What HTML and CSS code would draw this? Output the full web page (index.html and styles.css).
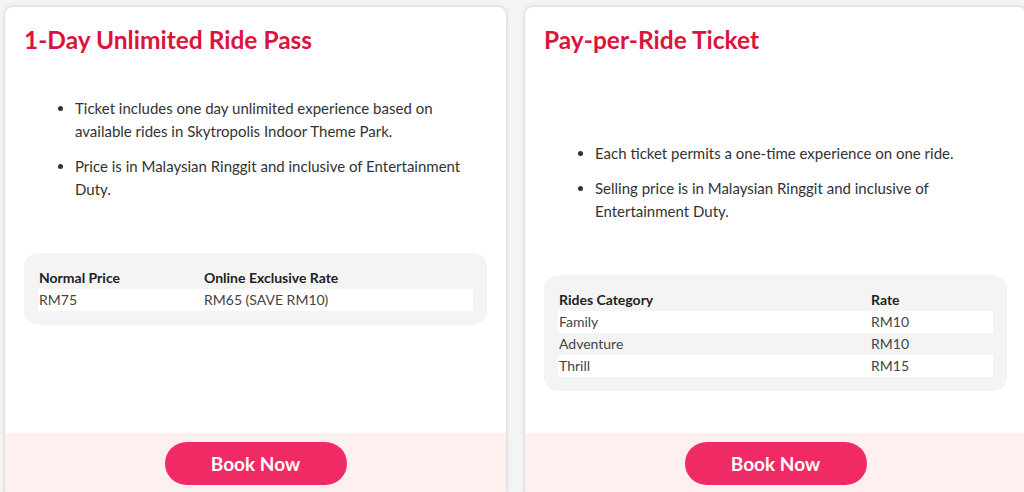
FILE: index.html
```html
<!DOCTYPE html>
<html>
<head>
<meta charset="utf-8">
<link rel="stylesheet" href="styles.css">
</head>
<body>
<div class="cards">
  <div class="card">
    <div class="card-body">
      <h2 class="title">1-Day Unlimited Ride Pass</h2>
      <ul class="list list-first">
        <li>Ticket includes one day unlimited experience based on available rides in Skytropolis Indoor Theme Park.</li>
        <li>Price is in Malaysian Ringgit and inclusive of Entertainment Duty.</li>
      </ul>
      <div class="table-box">
        <table class="rates">
          <tr><th class="col-a">Normal Price</th><th>Online Exclusive Rate</th></tr>
          <tr><td>RM75</td><td>RM65 (SAVE RM10)</td></tr>
        </table>
      </div>
    </div>
    <div class="card-footer"><button class="book">Book Now</button></div>
  </div>
  <div class="card">
    <div class="card-body">
      <h2 class="title">Pay-per-Ride Ticket</h2>
      <ul class="list list-second">
        <li>Each ticket permits a one-time experience on one ride.</li>
        <li>Selling price is in Malaysian Ringgit and inclusive of Entertainment Duty.</li>
      </ul>
      <div class="table-box">
        <table class="rates">
          <tr><th class="col-b">Rides Category</th><th>Rate</th></tr>
          <tr><td>Family</td><td>RM10</td></tr>
          <tr class="alt"><td>Adventure</td><td>RM10</td></tr>
          <tr><td>Thrill</td><td>RM15</td></tr>
        </table>
      </div>
    </div>
    <div class="card-footer"><button class="book">Book Now</button></div>
  </div>
</div>
</body>
</html>
```
FILE: styles.css
```css
html, body {
  margin: 0;
  padding: 0;
  background: #f4f4f4;
  font-family: Lato, "Noto Sans", sans-serif;
  color: #333;
  overflow: hidden;
}
.cards {
  display: flex;
  gap: 19px;
  padding: 7px 0 0 5px;
}
.card {
  width: 501px;
  flex: 0 0 501px;
  height: 494px;
  background: #fff;
  border-radius: 8px;
  box-shadow: 0 0 4px rgba(0,0,0,0.18);
  display: flex;
  flex-direction: column;
  overflow: hidden;
}
.card-body {
  flex: 1;
  padding: 18px 19px 0 19px;
}
.title {
  margin: 0;
  font-size: 24.5px;
  line-height: 30px;
  font-weight: 700;
  color: #dc143c;
}
.list {
  margin: 0;
  padding-left: 51px;
  font-size: 15px;
  line-height: 23px;
  color: #333;
}
.list li {
  margin-bottom: 12px;
}
.list li:last-child {
  margin-bottom: 0;
}
.list-first { margin-top: 42px; }
.list-second { margin-top: 87px; }
.table-box {
  margin-top: 52px;
  background: #f4f4f4;
  border-radius: 14px;
  padding: 14px;
}
.rates {
  width: 100%;
  border-collapse: collapse;
  font-size: 14px;
  color: #333;
}
.rates th, .rates td {
  text-align: left;
  height: 22px;
  padding: 0 0 0 1px;
  line-height: 22px;
}
.rates th {
  font-weight: 700;
  color: #222;
}
.rates td { background: #fff; color: #444; }
.rates tr.alt td { background: #f4f4f4; }
.col-a { width: 164px; }
.col-b { width: 311px; }
.card-footer {
  background: #fdf0ef;
  height: 68px;
  flex: 0 0 68px;
  padding-top: 9px;
  box-sizing: border-box;
  display: flex;
  justify-content: center;
  align-items: flex-start;
}
.book {
  width: 182px;
  height: 43px;
  border: none;
  border-radius: 22px;
  background: #f02a65;
  color: #fff;
  font-family: Lato, "Noto Sans", sans-serif;
  font-weight: 700;
  font-size: 19px;
}
```
